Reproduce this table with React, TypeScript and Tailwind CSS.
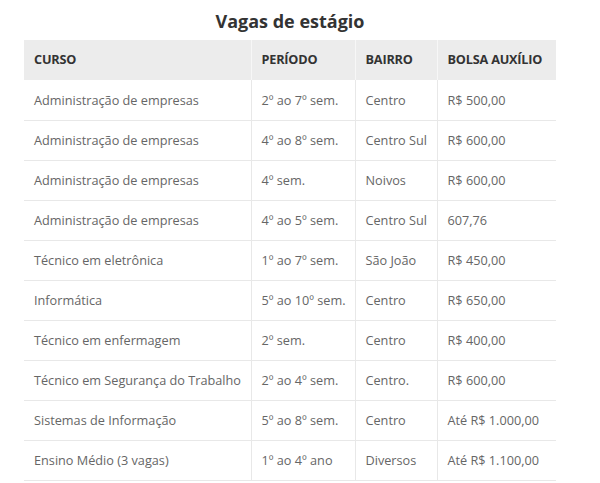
const rows = [
  ["Administração de empresas", "2º ao 7º sem.", "Centro", "R$ 500,00"],
  ["Administração de empresas", "4º ao 8º sem.", "Centro Sul", "R$ 600,00"],
  ["Administração de empresas", "4º sem.", "Noivos", "R$ 600,00"],
  ["Administração de empresas", "4º ao 5º sem.", "Centro Sul", "607,76"],
  ["Técnico em eletrônica", "1º ao 7º sem.", "São João", "R$ 450,00"],
  ["Informática", "5º ao 10º sem.", "Centro", "R$ 650,00"],
  ["Técnico em enfermagem", "2º sem.", "Centro", "R$ 400,00"],
  ["Técnico em Segurança do Trabalho", "2º ao 4º sem.", "Centro.", "R$ 600,00"],
  ["Sistemas de Informação", "5º ao 8º sem.", "Centro", "Até R$ 1.000,00"],
  ["Ensino Médio (3 vagas)", "1º ao 4º ano", "Diversos", "Até R$ 1.100,00"],
];

const headers = ["Curso", "Período", "Bairro", "Bolsa auxílio"];

export default function App() {
  return (
    <div className="w-[600px] h-[483px] bg-white font-['Open_Sans',sans-serif] overflow-hidden">
      <div className="w-[532px] ml-[24px]">
        <h1 className="h-[40px] pt-[9px] text-center text-[18px] leading-[25px] font-bold text-[#333]">
          Vagas de estágio
        </h1>
        <table className="w-full border-collapse table-fixed">
          <colgroup>
            <col className="w-[227px]" />
            <col className="w-[104px]" />
            <col className="w-[82px]" />
            <col className="w-[119px]" />
          </colgroup>
          <thead>
            <tr className="bg-[#ececec] h-[40px]">
              {headers.map((h, i) => (
                <th
                  key={h}
                  className={`text-left px-[10px] text-[12.7px] font-bold uppercase tracking-[-0.2px] whitespace-nowrap text-[#333] ${i > 0 ? "border-l border-[#f7f7f7]" : ""}`}
                >
                  {h}
                </th>
              ))}
            </tr>
          </thead>
          <tbody>
            {rows.map((r, ri) => (
              <tr key={ri} className="h-[40px] border-b border-[#e8e8e8]">
                {r.map((c, i) => (
                  <td
                    key={i}
                    className={`px-[10px] pt-[2px] text-[12.7px] text-[#666] whitespace-nowrap ${i > 0 ? "border-l border-[#e8e8e8]" : ""}`}
                  >
                    {c}
                  </td>
                ))}
              </tr>
            ))}
          </tbody>
        </table>
      </div>
    </div>
  );
}
